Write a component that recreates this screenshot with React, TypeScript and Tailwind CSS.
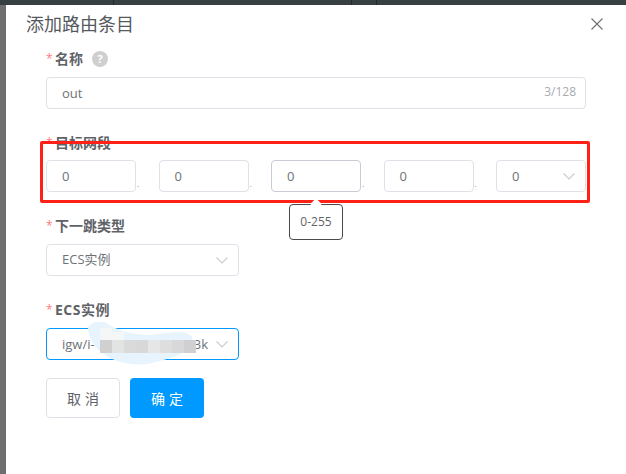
import React from "react";

const font = { fontFamily: '"Open Sans", "Noto Sans CJK SC", sans-serif' };

function Chevron() {
  return (
    <svg width="12" height="7" viewBox="0 0 12 7" className="shrink-0">
      <path d="M0.5 0.5 L6 6 L11.5 0.5" fill="none" stroke="#c8ccd2" strokeWidth="1.1" />
    </svg>
  );
}

function Label({ text, wide }: { text: string; wide?: boolean }) {
  return (
    <div className="flex items-center h-5 text-[14px] text-[#5f6368] font-bold leading-5">
      <span className="text-[#ff7a7a] w-[9px] text-[12px] font-normal">*</span>
      <span className={wide ? "tracking-[0.5px]" : ""}>{text}</span>
    </div>
  );
}

function Octet({ active }: { active?: boolean }) {
  return (
    <div
      className={`w-[90px] h-8 border rounded-[4px] pl-[15px] pt-px flex items-center text-[13px] text-[#6e7276] ${
        active ? "border-[#c9ccd8]" : "border-[#dfe1e8]"
      }`}
    >
      0
    </div>
  );
}

function Dot() {
  return (
    <div className="w-[22.5px] h-8 relative text-[#9a9ea3] text-[9px] leading-none">
      <span className="absolute left-[1px] top-[19px]">.</span>
    </div>
  );
}

const mosaic = [
  { x: 14, y: 20, h: 13, c: "#d0d0d0" },
  { x: 26, y: 20, h: 13, c: "#e2e3e3" },
  { x: 38, y: 20, h: 13, c: "#dadada" },
  { x: 50, y: 20, h: 13, c: "#d8d8d8" },
  { x: 62, y: 20, h: 13, c: "#e6e6e6" },
  { x: 74, y: 20, h: 13, c: "#dedede" },
  { x: 86, y: 20, h: 13, c: "#d8d8d8" },
  { x: 98, y: 20, h: 13, c: "#d0d0d2" },
];

export default function App() {
  return (
    <div className="relative w-[626px] h-[474px] overflow-hidden bg-[#6e6e6e]" style={font}>
      <div className="h-[5px] bg-[#373f43] flex">
        <div className="w-[114px] border-r border-[#22282b]" />
        <div className="w-[238px] border-r border-[#22282b]" />
        <div className="w-[25px] border-r border-[#22282b]" />
      </div>
      <div className="ml-[6px] h-[469px] bg-white">
        <div className="relative h-[38px] pl-[20px] pt-[6px] text-[18px] leading-[26px] text-[#55595d]">
          添加路由条目
          <svg
            width="12"
            height="12"
            viewBox="0 0 12 12"
            className="absolute left-[585px] top-[13px]"
          >
            <path d="M0.5 0.5 L11.5 11.5 M11.5 0.5 L0.5 11.5" stroke="#6b6f73" strokeWidth="1.1" fill="none" />
          </svg>
        </div>

        <div className="pl-[40px] flex flex-col">
          <div className="mt-[6px] flex items-center">
            <Label text="名称" />
            <span className="ml-[9px] w-4 h-4 rounded-full bg-[#cfcfcf] text-white text-[11px] font-bold flex items-center justify-center">
              ?
            </span>
          </div>
          <div className="mt-[8px] w-[540px] h-8 border border-[#dfe1e8] rounded-[4px] flex items-center justify-between pl-[15px] pr-[9px] pt-px text-[13px] text-[#6e7276]">
            <span>out</span>
            <span className="text-[12px] text-[#a8abb0] -mt-[4px]">3/128</span>
          </div>

          <div className="mt-[24px]">
            <Label text="目标网段" />
          </div>
          <div className="mt-[7px] flex">
            <Octet />
            <Dot />
            <Octet />
            <Dot />
            <Octet active />
            <Dot />
            <Octet />
            <Dot />
            <div className="w-[90px] h-8 border border-[#dfe1e8] rounded-[4px] pl-[15px] pr-[10px] pt-px flex items-center justify-between text-[13px] text-[#6e7276]">
              <span>0</span>
              <Chevron />
            </div>
          </div>

          <div className="mt-[24px]">
            <Label text="下一跳类型" />
          </div>
          <div className="mt-[8px] w-[193px] h-8 border border-[#dfe1e8] rounded-[4px] pl-[15px] pr-[10px] flex items-center justify-between text-[13px] text-[#6e7276]">
            <span>ECS实例</span>
            <Chevron />
          </div>

          <div className="mt-[24px]">
            <Label text="ECS实例" wide />
          </div>
          <div className="mt-[8px] w-[193px] h-8 border border-[#0099ff] rounded-[4px] pl-[15px] pr-[10px] pt-px flex items-center justify-between text-[13px] text-[#6e7276]">
            <span>igw/i-</span>
            <span className="ml-auto mr-[8px]">33k</span>
            <Chevron />
          </div>

          <div className="mt-[18px] flex gap-[10px]">
            <div className="w-[74px] h-10 border border-[#dfe1e8] rounded-[4px] pl-[4px] flex items-center justify-center text-[14px] tracking-[4px] text-[#5f6368]">
              取消
            </div>
            <div className="w-[74px] h-10 bg-[#0099ff] rounded-[4px] pl-[4px] flex items-center justify-center text-[14px] tracking-[4px] text-white">
              确定
            </div>
          </div>
        </div>
      </div>

      {/* Annotation frame */}
      <div className="absolute left-[40px] top-[141px] w-[550px] h-[62px] border-[3px] border-[#ff2016] rounded-[2px]" />

      {/* Tooltip */}
      <div className="absolute left-[289px] top-[204px] w-[54px] h-[36px] bg-white border border-[#4a4a4a] rounded-[4px] flex items-center justify-center text-[12px] text-[#5f6368]">
        0-255
      </div>
      <div className="absolute left-[312px] top-[200px] w-[8px] h-[8px] bg-white rotate-45" />

      {/* Privacy smear */}
      <svg width="112" height="46" viewBox="0 0 112 46" className="absolute left-[86px] top-[320px]">
        <path
          d="M2 8 C4 1 16 0 22 4 C30 10 44 14 62 15 C76 14 90 10 100 13 C110 16 108 26 98 32 C86 39 72 41 62 44 C50 45 36 44 24 38 C12 32 3 22 2 8 Z"
          fill="#e7f4fe"
        />
        <rect x="14" y="8" width="12" height="12" fill="#f5f6f6" />
        <rect x="26" y="12" width="12" height="8" fill="#f4f7f8" />
        {mosaic.map((m) => (
          <rect key={m.x} x={m.x} y={m.y} width="12" height={m.h} fill={m.c} />
        ))}
      </svg>
    </div>
  );
}
